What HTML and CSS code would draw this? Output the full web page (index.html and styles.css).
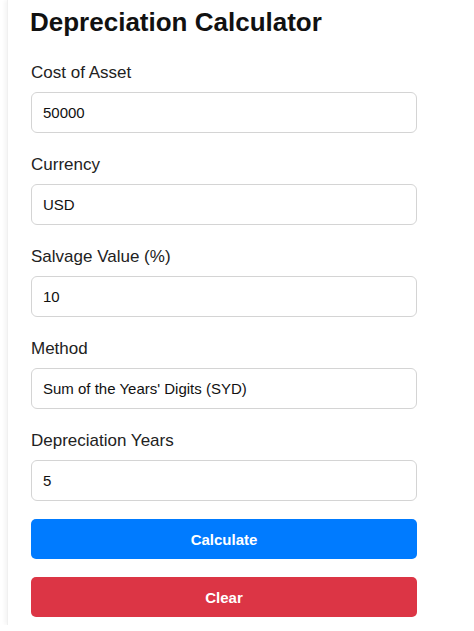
FILE: index.html
```html
<!DOCTYPE html>
<html lang="en">
<head>
<meta charset="utf-8">
<title>Depreciation Calculator</title>
<link rel="stylesheet" href="styles.css">
</head>
<body>
<div class="card">
  <h1 class="title">Depreciation Calculator</h1>
  <form class="form">
    <div class="field">
      <label class="label" for="cost">Cost of Asset</label>
      <input class="input" id="cost" type="text" value="50000">
    </div>
    <div class="field">
      <label class="label" for="currency">Currency</label>
      <input class="input" id="currency" type="text" value="USD">
    </div>
    <div class="field">
      <label class="label" for="salvage">Salvage Value (%)</label>
      <input class="input" id="salvage" type="text" value="10">
    </div>
    <div class="field">
      <label class="label" for="method">Method</label>
      <input class="input" id="method" type="text" value="Sum of the Years' Digits (SYD)">
    </div>
    <div class="field last">
      <label class="label" for="years">Depreciation Years</label>
      <input class="input" id="years" type="text" value="5">
    </div>
    <button class="btn btn-primary" type="button">Calculate</button>
    <button class="btn btn-danger" type="button">Clear</button>
  </form>
</div>
</body>
</html>
```
FILE: styles.css
```css
html, body {
  margin: 0;
  padding: 0;
  background: #ffffff;
  overflow: hidden;
}

body {
  font-family: "Liberation Sans", Arial, Helvetica, sans-serif;
  color: #222222;
}

.card {
  margin-left: 7px;
  padding: 7px 23px 8px 23px;
  background: #ffffff;
  border-left: 1px solid #f0f0f0;
  box-shadow: -2px 0 4px rgba(0, 0, 0, 0.05);
  min-height: 612px;
  box-sizing: border-box;
}

.title {
  margin: 0 0 26px -1px;
  font-size: 26px;
  line-height: 30px;
  font-weight: bold;
  color: #111111;
}

.form {
  width: 386px;
  display: flex;
  flex-direction: column;
}

.field {
  display: flex;
  flex-direction: column;
  margin-bottom: 22px;
}

.field.last {
  margin-bottom: 18px;
}

.label {
  font-size: 17px;
  line-height: 20px;
  color: #222222;
  margin-bottom: 9px;
}

.input {
  box-sizing: border-box;
  width: 100%;
  height: 41px;
  padding: 0 11px;
  border: 1px solid #d4d4d4;
  border-radius: 6px;
  font-family: "Liberation Sans", Arial, Helvetica, sans-serif;
  font-size: 15px;
  color: #111111;
  background: #ffffff;
  outline: none;
}

.btn {
  box-sizing: border-box;
  width: 100%;
  height: 40px;
  border: none;
  border-radius: 5px;
  font-family: "Liberation Sans", Arial, Helvetica, sans-serif;
  font-size: 15px;
  font-weight: bold;
  color: #ffffff;
  cursor: pointer;
}

.btn-primary {
  background: #007bff;
  margin-bottom: 18px;
}

.btn-danger {
  background: #dc3545;
}
```
